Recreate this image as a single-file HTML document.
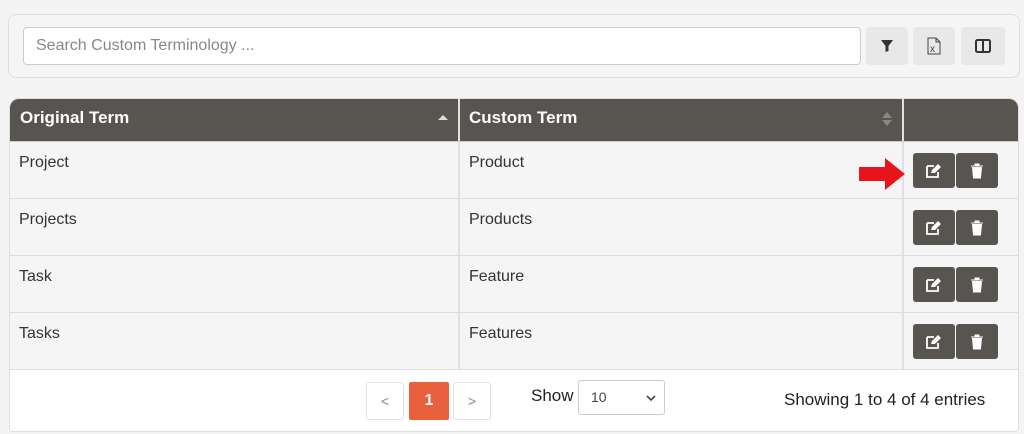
<!DOCTYPE html><html><head><style>
body{margin:0;width:1024px;height:434px;background:#f4f4f4;font-family:"Liberation Sans",sans-serif;position:relative;overflow:hidden}
.a{position:absolute;box-sizing:border-box}
.btn{background:#e8e8e8;border-radius:4px;display:flex;align-items:center;justify-content:center}
.th{color:#fff;font-weight:bold;font-size:17px;padding:9px 10px}
.td{font-size:16px;color:#333;padding:13px 10px}
.ab{background:#58544f;border-radius:3px;width:42px;height:35px;display:flex;align-items:center;justify-content:center}
</style></head><body>
<div class="a" style="left:8px;top:14px;width:1012px;height:64px;border:1px solid #ddd;border-radius:8px;background:#f5f5f5"></div>
<div class="a" style="left:23px;top:27px;width:838px;height:38px;background:#fff;border:1px solid #ccc;border-radius:4px;padding:9px 12px;color:#888;font-size:16px">Search Custom Terminology ...</div>
<div class="a btn" style="left:866px;top:27px;width:42px;height:38px"><svg width="14" height="14" viewBox="0 0 14 14"><path d="M1 1H13L8.5 7V12L5.5 13V7Z" fill="#333"/></svg></div>
<div class="a btn" style="left:913px;top:27px;width:42px;height:38px"><svg width="14" height="18" viewBox="0 0 14 18"><path d="M1 1H9L13 5V17H1Z M9 1V5H13" fill="none" stroke="#444"/><text x="3" y="15" font-size="10" fill="#444" font-family="Liberation Sans">x</text></svg></div>
<div class="a btn" style="left:961px;top:27px;width:44px;height:38px"><svg width="16" height="14" viewBox="0 0 16 14"><rect x="1" y="1" width="14" height="12" rx="1.5" fill="none" stroke="#333" stroke-width="2"/><path d="M8 1V13" stroke="#333" stroke-width="2"/></svg></div>
<div class="a" style="left:9px;top:98px;width:1010px;height:334px;border:1px solid #ddd;border-radius:10px 10px 4px 4px;overflow:hidden;background:#f5f5f5">
<div class="a" style="left:0;top:0;width:1010px;height:42px;background:#58544f"></div>
<div class="a th" style="left:0;top:0">Original Term</div>
<div class="a th" style="left:449px;top:0">Custom Term</div>
<div class="a" style="left:428px;top:16px;width:0;height:0;border:5px solid transparent;border-bottom-color:#ddd;border-top:0"></div>
<div class="a" style="left:872px;top:13px;width:0;height:0;border:5px solid transparent;border-bottom:6px solid #8a8580;border-top:0"></div>
<div class="a" style="left:872px;top:21px;width:0;height:0;border:5px solid transparent;border-top:6px solid #8a8580;border-bottom:0"></div>
<div class="a" style="left:448px;top:0;width:2px;height:271px;background:#e0e0e0"></div>
<div class="a" style="left:892px;top:0;width:2px;height:271px;background:#e0e0e0"></div>
<div class="a" style="left:0;top:42px;width:1010px;height:1px;background:#ccc"></div>
<div class="a" style="left:0;top:99px;width:1010px;height:1px;background:#ddd"></div>
<div class="a" style="left:0;top:156px;width:1010px;height:1px;background:#ddd"></div>
<div class="a" style="left:0;top:213px;width:1010px;height:1px;background:#ddd"></div>
<div class="a" style="left:0;top:270px;width:1010px;height:64px;background:#fff;border-top:1px solid #ddd"></div>
</div>
<div class="a td" style="left:9px;top:141px">Project</div><div class="a td" style="left:459px;top:141px">Product</div>
<div class="a td" style="left:9px;top:198px">Projects</div><div class="a td" style="left:459px;top:198px">Products</div>
<div class="a td" style="left:9px;top:255px">Task</div><div class="a td" style="left:459px;top:255px">Feature</div>
<div class="a td" style="left:9px;top:312px">Tasks</div><div class="a td" style="left:459px;top:312px">Features</div>
<div class="a ab" style="left:913px;top:153px"><svg width="18" height="16"><path d="M2 3H9M2 3V14H13V9" fill="none" stroke="#fff" stroke-width="1.8"/><path d="M6 10L7 7L13 1L16 4L10 10Z" fill="#fff"/></svg></div>
<div class="a ab" style="left:956px;top:153px"><svg width="14" height="16"><path d="M1 3H13M5 3V1H9V3M2.5 4.5H11.5L10.5 15H3.5Z" fill="#fff" stroke="#fff"/></svg></div>
<div class="a ab" style="left:913px;top:210px"><svg width="18" height="16"><path d="M2 3H9M2 3V14H13V9" fill="none" stroke="#fff" stroke-width="1.8"/><path d="M6 10L7 7L13 1L16 4L10 10Z" fill="#fff"/></svg></div>
<div class="a ab" style="left:956px;top:210px"><svg width="14" height="16"><path d="M1 3H13M5 3V1H9V3M2.5 4.5H11.5L10.5 15H3.5Z" fill="#fff" stroke="#fff"/></svg></div>
<div class="a ab" style="left:913px;top:267px"><svg width="18" height="16"><path d="M2 3H9M2 3V14H13V9" fill="none" stroke="#fff" stroke-width="1.8"/><path d="M6 10L7 7L13 1L16 4L10 10Z" fill="#fff"/></svg></div>
<div class="a ab" style="left:956px;top:267px"><svg width="14" height="16"><path d="M1 3H13M5 3V1H9V3M2.5 4.5H11.5L10.5 15H3.5Z" fill="#fff" stroke="#fff"/></svg></div>
<div class="a ab" style="left:913px;top:324px"><svg width="18" height="16"><path d="M2 3H9M2 3V14H13V9" fill="none" stroke="#fff" stroke-width="1.8"/><path d="M6 10L7 7L13 1L16 4L10 10Z" fill="#fff"/></svg></div>
<div class="a ab" style="left:956px;top:324px"><svg width="14" height="16"><path d="M1 3H13M5 3V1H9V3M2.5 4.5H11.5L10.5 15H3.5Z" fill="#fff" stroke="#fff"/></svg></div>
<svg class="a" style="left:857px;top:156px" width="50" height="36"><path d="M2 11H28V2L48 18L28 34V25H2Z" fill="#e8141b"/></svg>
<div class="a" style="left:366px;top:382px;width:38px;height:38px;border:1px solid #e2e2e2;border-radius:3px;background:#fff;color:#888;text-align:center;line-height:36px;font-size:14px">&lt;</div>
<div class="a" style="left:409px;top:382px;width:40px;height:38px;background:#e8603c;border-radius:2px;color:#fff;font-weight:bold;text-align:center;line-height:38px;font-size:16px">1</div>
<div class="a" style="left:453px;top:382px;width:38px;height:38px;border:1px solid #e2e2e2;border-radius:3px;background:#fff;color:#888;text-align:center;line-height:36px;font-size:14px">&gt;</div>
<div class="a" style="left:531px;top:386px;font-size:17px;color:#222">Show</div>
<div class="a" style="left:578px;top:380px;width:87px;height:35px;border:1px solid #ccc;border-radius:3px;background:#fff;padding:8px 12px;font-size:14px;color:#444">10<svg style="position:absolute;right:8px;top:14px" width="10" height="7"><path d="M1 1L5 5L9 1" fill="none" stroke="#444" stroke-width="1.6"/></svg></div>
<div class="a" style="left:784px;top:390px;font-size:17px;color:#222">Showing 1 to 4 of 4 entries</div>
</body></html>
